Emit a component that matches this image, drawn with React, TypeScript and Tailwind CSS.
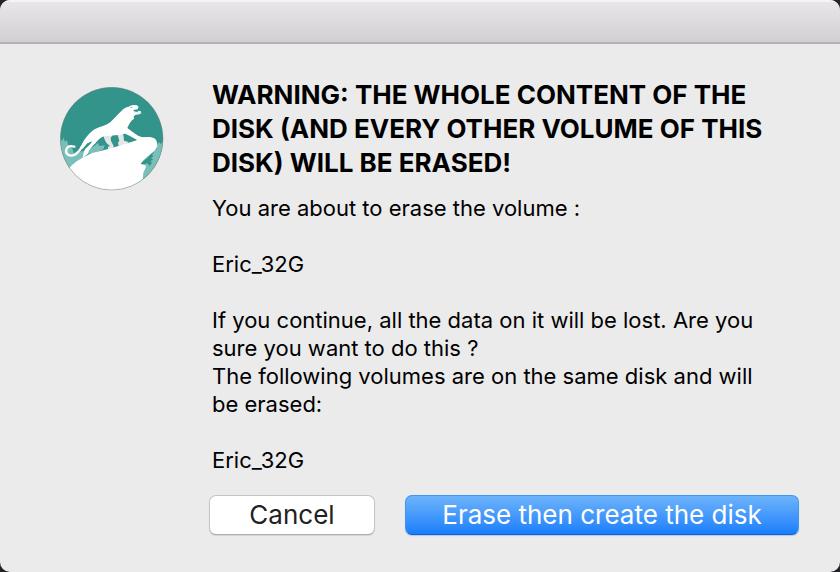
import React from "react";

function AppIcon() {
  return (
    <svg viewBox="30 27 312 312" className="size-[104px] shrink-0" role="img" aria-label="Application icon">
      <defs>
        <clipPath id="disc">
          <circle cx="185" cy="182" r="154" />
        </clipPath>
      </defs>
      <g clipPath="url(#disc)">
        <rect x="28" y="24" width="316" height="316" fill="#32948a" />
        <path
          d="M28 176 L37 190 L40 178 L45 192 L51 186 L54 200 L66 210 L72 226 L84 222 L104 218 V270 H28 Z M300 212 L318 206 L327 192 L332 198 L344 186 V340 H260 V250 Z"
          fill="#7ac0b8"
        />
        <path d="M112 228 L122 210 L136 202 L144 194 L148 204 L164 202 L160 214 L134 224 Z" fill="#7ac0b8" />
        <path
          d="M266 262 L284 246 L296 236 L304 224 L318 206 L322 212 L312 218 L310 226 L305 230 L311 234 L303 240 L310 245 L301 249 L306 256 L298 264 L293 255 L282 259 Z"
          fill="#32948a"
        />
        <path
          d="M160 172 L190 168 L182 180 L183 189 L191 204 L190 212 L174 214 L174 206 L180 204 L170 196 L164 185 Z M202 168 L218 164 L221 176 L222 188 L236 192 L224 202 L206 204 L204 194 L208 188 Z"
          fill="#e4e7e6"
        />
        <path
          d="M56 274 C66 258 84 248 100 238 L126 225 L184 211 L224 198 L256 188 L272 180 C288 176 306 176 315 182 C323 190 324 206 318 213 C306 229 280 241 272 258 C282 260 288 261 288 266 L280 284 L278 306 L278 344 H28 V270 Z"
          fill="#fff"
        />
        <path
          d="M98 240 C100 226 102 218 106 212 C116 204 122 198 127 190 L112 196 L98 212 L88 212 L98 194 C108 176 122 160 137 152 C150 147 166 143 181 133 C190 124 202 110 214 99 C220 92 227 87 236 86 C242 82 249 81 259 81 L266 86 L263 94 L250 96 L253 102 L264 104 L267 109 L255 111 L251 116 L252 122 C242 128 236 140 232 150 L248 162 C262 172 270 178 286 178 L292 186 L266 188 L238 173 L226 167 L204 171 L162 175 C148 180 142 190 134 198 C124 206 118 216 113 228 Z"
          fill="#fff"
        />
        <path d="M252 100 L262 102 L266 98 L273 100 L274 106 L268 109 L255 107 Z" fill="#e9f5f3" />
        <path d="M112 180 C101 201 89 221 75 230 C59 238 45 228 49 215 C52 205 62 203 73 206" fill="none" stroke="#fff" strokeWidth="7" strokeLinecap="round" />
        <path d="M242 89 L247 88" stroke="#32948a" strokeWidth="2" />
      </g>
      <circle cx="185" cy="182" r="154" fill="none" stroke="#777" strokeOpacity=".65" strokeWidth="2" />
    </svg>
  );
}

export default function App() {
  return (
    <div className="min-h-screen bg-[#242226] font-['Inter','Liberation_Sans',sans-serif] text-black">
      <main
        role="alertdialog"
        aria-labelledby="title"
        aria-describedby="message"
        className="flex min-h-screen flex-col overflow-hidden rounded-[10px] bg-[#ebebeb]"
      >
        <header className="h-11 shrink-0 border-t-2 border-b-2 border-t-[#f5f4f5] border-b-[#b3b1b3] bg-linear-to-b from-[#e8e6e8] to-[#d1cfd1]" />
        <div className="flex gap-12 pt-[34px] pr-[60px] pl-[60px]">
          <div className="pt-[9px]">
            <AppIcon />
          </div>
          <div className="min-w-0 flex-1">
            <h1 id="title" className="text-[26px] leading-[34px] font-bold">
              WARNING: THE WHOLE CONTENT OF THE DISK (AND EVERY OTHER VOLUME OF THIS DISK) WILL BE ERASED!
            </h1>
            <div id="message" className="mt-[14px] text-[22px] leading-7">
              <p>You are about to erase the volume :</p>
              <p className="mt-7">Eric_32G</p>
              <p className="mt-7">If you continue, all the data on it will be lost. Are you sure you want to do this ?</p>
              <p>The following volumes are on the same disk and will be erased:</p>
              <p className="mt-7">Eric_32G</p>
            </div>
          </div>
        </div>
        <div className="flex gap-[30px] pt-[21px] pr-[41px] pb-9 pl-[209px]">
          <button
            type="button"
            className="h-10 w-[166px] shrink-0 rounded-[7px] border border-[#c4c4c4] border-b-[#adadad] bg-white text-[26px] leading-8 text-[#222] shadow-[0_1px_1px_#0000001a]"
          >
            Cancel
          </button>
          <button
            type="button"
            className="h-10 flex-1 rounded-[7px] border border-[#3f96f5] border-b-[#0a5ff0] bg-linear-to-b from-[#6cb3fa] to-[#167efc] text-[26px] leading-8 whitespace-nowrap text-white shadow-[0_1px_1px_#0000002a]"
          >
            Erase then create the disk
          </button>
        </div>
      </main>
    </div>
  );
}
